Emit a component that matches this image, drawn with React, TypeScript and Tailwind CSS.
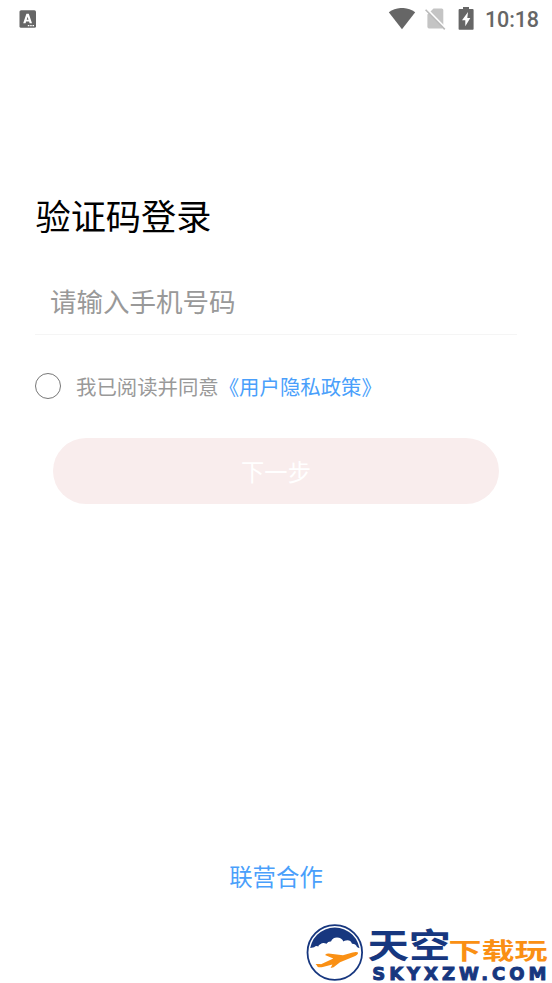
import { useState } from "react";

function StatusBar() {
  return (
    <header className="flex h-[37px] items-center justify-between pl-[19px] pr-[13px]">
      <svg viewBox="0 0 18 18" className="h-[18px] w-[18px]">
        <rect x="0.5" y="0.2" width="16.5" height="17.6" rx="1.6" fill="#666" />
        <path d="M4.2 13.2 7.4 3.8h2.4l3.2 9.4h-2.4l-.5-1.7H7.1l-.5 1.7ZM7.7 9.7h1.8l-.9-3Z" fill="#fff" />
        <path d="M8.8 15.6h1.6m.8 0h1.5m.8 0h1.5" stroke="#fff" strokeWidth="1.1" />
      </svg>
      <div className="flex items-center text-[#666]">
        <svg viewBox="0 0 28 22" className="h-[22px] w-7">
          <path d="M0.8 4.3C8.7-1.5 19.3-1.5 27.2 4.3L14 21.3Z" fill="currentColor" />
        </svg>
        <svg viewBox="0 0 22 22" className="ml-[9px] h-[22px] w-[22px]">
          <path d="M8.5 0.4h8.2a1.6 1.6 0 0 1 1.6 1.6v17.1a1.3 1.3 0 0 1-1.3 1.3H4a1.6 1.6 0 0 1-1.6-1.6V6.5Z" fill="#c4c4c4" />
          <path d="M1.8 1 20.8 20.4" stroke="#fff" strokeWidth="1.8" />
          <path d="M0.6 1.8 19.8 21.4" stroke="#bbb" strokeWidth="1.6" />
        </svg>
        <svg viewBox="0 0 16 23" className="ml-[11px] h-[23px] w-4">
          <path d="M5 0h6v2h3.6q1 0 1 1V22q0 .8-.8.8H1.4q-.8 0-.8-.8V3q0-1 1-1H5Z" fill="currentColor" />
          <path d="M10 5 4 13.3h3.3v6L12.3 11H9.3Z" fill="#fff" />
        </svg>
        <span className="ml-[10.5px] mt-[2px] font-['Roboto',sans-serif] text-[21.5px] font-medium leading-6 tracking-[-0.1px]">10:18</span>
      </div>
    </header>
  );
}

function BrandLogo() {
  return (
    <svg viewBox="0 -8 244 71" className="h-[71px] w-[244px]" role="img">
      <defs>
        <clipPath id="badge">
          <circle cx="28.8" cy="32.5" r="25" />
        </clipPath>
      </defs>
      <circle cx="28.8" cy="32.5" r="27.3" fill="#fff" stroke="#17377f" strokeWidth="1.8" />
      <g clipPath="url(#badge)">
        <path
          d="M0 0h58v28.5q-5 0-7-1.5-1.5-3.5-5-3.3-1.5-4-6-3.2-1.5.2-2.5 1-2-4-6.5-4-4.5.2-6 4-2.7-.4-4.5 2.3-3.5-1.6-6.2.4-2 1-2 2.2-2.4-1-4.2.8L0 29Z"
          fill="#17377f"
        />
      </g>
      <path
        d="M9.6 44h4.4l1 .3L27.3 38.6 19 34.9q1.5-1.4 3.6-1.4L37 35.3l9.6-2.9q4-.9 5.4.1c.4 1.6-1.6 3.3-4 4.1L34 42.3l-6.4 5-3 .6 1.8-3.4-9.6 2.6q-3.2.5-5-.2Q11 45.4 9.6 44Z"
        fill="#fa9014"
      />
      <g fontFamily="'Noto Sans CJK SC', sans-serif" fontWeight="700">
        <text x="61.5" y="38" fontSize="34" textLength="83" lengthAdjust="spacingAndGlyphs" fill="#17377f">天空</text>
        <text x="142.5" y="38.5" fontSize="23" textLength="99" lengthAdjust="spacingAndGlyphs" fill="#fa9014">下载玩</text>
      </g>
      <text
        x="66.3"
        y="60"
        fontFamily="'DejaVu Sans', sans-serif"
        fontWeight="700"
        fontSize="18"
        textLength="174"
        fill="#17377f"
        stroke="#17377f"
        strokeWidth="1"
      >
        SKYXZW.COM
      </text>
    </svg>
  );
}

export default function App() {
  const [phone, setPhone] = useState("");
  const [agreed, setAgreed] = useState(false);

  return (
    <div className="flex h-[983px] w-[552px] flex-col overflow-hidden bg-white font-['Noto_Sans_CJK_SC',sans-serif]">
      <StatusBar />

      <main className="px-[35px] pt-[152px]">
        <h1 className="pl-[0.5px] text-[35.2px] leading-[52px] text-black">验证码登录</h1>

        <div className="mt-[29px] h-[65px] border-b border-[#f5f5f5] px-[15px]">
          <input
            type="tel"
            value={phone}
            onChange={(e) => setPhone(e.target.value)}
            placeholder="请输入手机号码"
            className="h-[61px] w-full bg-transparent text-[26.5px] text-[#333] placeholder:text-[#999] focus:outline-none"
          />
        </div>

        <div className="mt-[35px] flex h-8 items-center text-[20.4px]">
          <button
            onClick={() => setAgreed(!agreed)}
            className="flex h-[26px] w-[26px] items-center justify-center rounded-full border border-[#777]"
          >
            {agreed && <span className="h-3 w-3 rounded-full bg-[#4a9ffb]" />}
          </button>
          <p className="ml-[15px] text-[#999]">
            我已阅读并同意<a className="text-[#4a9ffb]">《用户隐私政策》</a>
          </p>
        </div>

        <button className="mx-[18px] mt-9 h-[66px] w-[446px] rounded-full bg-[#f9eded] text-[23.3px] text-white">
          下一步
        </button>
      </main>

      <footer className="mt-auto flex flex-col items-center">
        <a className="text-[23.4px] leading-9 text-[#4a9ffb]">联营合作</a>
        <div className="mt-[18px] self-end pr-[2px]">
          <BrandLogo />
        </div>
      </footer>
    </div>
  );
}
